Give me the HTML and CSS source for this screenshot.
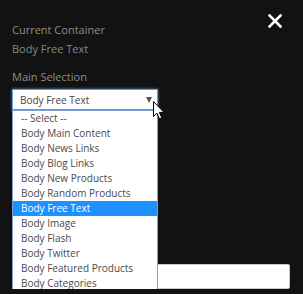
FILE: index.html
```html
<!DOCTYPE html>
<html lang="en">
<head>
    <meta charset="UTF-8">
    <title>Container Settings</title>
    <link rel="stylesheet" href="styles.css">
</head>
<body>
  <div class="panel">
    <a class="close" href="#">
      <svg width="14" height="14" viewBox="0 0 14 14"><path d="M1.5 1.5 L12.5 12.5 M12.5 1.5 L1.5 12.5" stroke="#fff" stroke-width="2.6" stroke-linecap="square"/></svg>
    </a>

    <div class="label">Current Container</div>
    <div class="value">Body Free Text</div>

    <div class="label main-label">Main Selection</div>
    <div class="select-wrap">
      <div class="select">
        <span>Body Free Text</span>
        <span class="arrow"></span>
      </div>
      <ul class="options">
        <li>-- Select --</li>
        <li>Body Main Content</li>
        <li>Body News Links</li>
        <li>Body Blog Links</li>
        <li>Body New Products</li>
        <li>Body Random Products</li>
        <li class="active">Body Free Text</li>
        <li>Body Image</li>
        <li>Body Flash</li>
        <li>Body Twitter</li>
        <li>Body Featured Products</li>
        <li>Body Categories</li>
      </ul>
      <svg class="cursor" width="12" height="19" viewBox="0 0 12 19"><path d="M0.5 0.5 L0.5 15.5 L4 12.2 L6.5 18 L8.8 17 L6.4 11.4 L11 11.4 Z" fill="#fff" stroke="#000" stroke-width="1"/></svg>
    </div>

    <input class="text-input" type="text">
  </div>
</body>
</html>
```

FILE: styles.css
```css
body {
    margin: 0;
    background-color: #121212;
    font-family: "Open Sans", Arial, sans-serif;
}

.panel {
    position: relative;
    padding: 22px 13px 0 12px;
}

.close {
    position: absolute;
    top: 14px;
    right: 21px;
    display: block;
    width: 14px;
    height: 14px;
}

.close svg {
    display: block;
}

.label {
    font-size: 11px;
    line-height: 15px;
    color: #8d8d8d;
}

.value {
    font-size: 11px;
    line-height: 15px;
    color: #7e8a90;
    margin-top: 4px;
}

.main-label {
    margin-top: 13px;
}

.select-wrap {
    position: relative;
    margin-top: 5px;
    width: 146px;
}

.select {
    display: flex;
    align-items: center;
    justify-content: space-between;
    height: 19px;
    padding: 0 5px 0 7px;
    background: #fff;
    border: 1px solid #5b9be0;
    box-shadow: 0 0 3px rgba(102, 175, 233, 0.7);
    font-size: 10px;
    color: #444;
}

.arrow {
    width: 0;
    height: 0;
    border-left: 3.5px solid transparent;
    border-right: 3.5px solid transparent;
    border-top: 6px solid #555;
}

.options {
    position: absolute;
    top: 21px;
    left: 0;
    width: 144px;
    margin: 0;
    padding: 0;
    list-style: none;
    background: #fff;
    border: 1px solid #7a9fd8;
    z-index: 2;
}

.options li {
    height: 15px;
    line-height: 15px;
    padding-left: 8px;
    font-size: 10px;
    color: #4a4a4a;
}

.options li.active {
    background-color: #1e90ff;
    color: #fff;
}

.cursor {
    position: absolute;
    left: 141px;
    top: 12px;
    z-index: 3;
}

.text-input {
    display: block;
    box-sizing: border-box;
    width: 278px;
    height: 25px;
    margin-top: 154px;
    border: 1px solid #c8c8c8;
    border-radius: 2px;
    background: #fff;
}
```
